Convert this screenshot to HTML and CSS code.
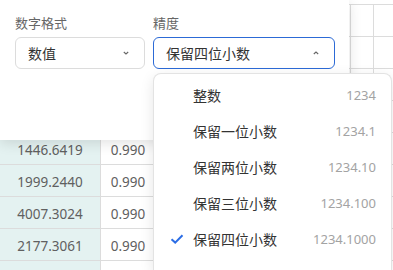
FILE: index.html
```html
<!DOCTYPE html>
<html lang="zh-CN">
<head>
  <meta charset="UTF-8" />
  <title>数字格式</title>
  <link rel="stylesheet" href="styles.css">
</head>
<body>
  <div class="sheet">
    <div class="row"><div class="c c1"></div><div class="c c2"></div><div class="c c3"></div><div class="c c4"></div><div class="c c5"></div></div>
    <div class="row"><div class="c c1"></div><div class="c c2"></div><div class="c c3"></div><div class="c c4"></div><div class="c c5"></div></div>
    <div class="row"><div class="c c1"></div><div class="c c2"></div><div class="c c3"></div><div class="c c4"></div><div class="c c5"></div></div>
    <div class="row"><div class="c c1"></div><div class="c c2"></div><div class="c c3"></div><div class="c c4"></div><div class="c c5"></div></div>
    <div class="row"><div class="c c1">1446.6419</div><div class="c c2">0.990</div><div class="c c3"></div><div class="c c4"></div><div class="c c5"></div></div>
    <div class="row"><div class="c c1">1999.2440</div><div class="c c2">0.990</div><div class="c c3"></div><div class="c c4"></div><div class="c c5"></div></div>
    <div class="row"><div class="c c1">4007.3024</div><div class="c c2">0.990</div><div class="c c3"></div><div class="c c4"></div><div class="c c5"></div></div>
    <div class="row"><div class="c c1">2177.3061</div><div class="c c2">0.990</div><div class="c c3"></div><div class="c c4"></div><div class="c c5"></div></div>
    <div class="row last"><div class="c c1"></div><div class="c c2"></div><div class="c c3"></div><div class="c c4"></div><div class="c c5"></div></div>
  </div>

  <div class="panel">
    <div class="field">
      <label>数字格式</label>
      <div class="select">
        <span>数值</span>
        <svg width="10" height="10" viewBox="0 0 10 10"><path d="M2.8 4 L5 6 L7.2 4" fill="none" stroke="#666" stroke-width="1.1"/></svg>
      </div>
    </div>
    <div class="field wide">
      <label>精度</label>
      <div class="select open">
        <span>保留四位小数</span>
        <svg width="10" height="10" viewBox="0 0 10 10"><path d="M2.8 6 L5 4 L7.2 6" fill="none" stroke="#666" stroke-width="1.1"/></svg>
      </div>
    </div>
  </div>

  <ul class="menu">
    <li><span class="tick"></span><span class="name">整数</span><span class="val">1234</span></li>
    <li><span class="tick"></span><span class="name">保留一位小数</span><span class="val">1234.1</span></li>
    <li><span class="tick"></span><span class="name">保留两位小数</span><span class="val">1234.10</span></li>
    <li><span class="tick"></span><span class="name">保留三位小数</span><span class="val">1234.100</span></li>
    <li class="active">
      <span class="tick"><svg width="14" height="12" viewBox="0 0 14 12"><path d="M1.5 6.2 L5.2 9.6 L12.5 2.2" fill="none" stroke="#2b6de5" stroke-width="2"/></svg></span>
      <span class="name">保留四位小数</span><span class="val">1234.1000</span>
    </li>
  </ul>
</body>
</html>
```

FILE: styles.css
```css
body {
  margin: 0;
  width: 393px;
  height: 270px;
  overflow: hidden;
  background: #fff;
  font-family: "Noto Sans", "Noto Sans CJK SC", sans-serif;
  color: #333;
  position: relative;
}

/* sheet behind the popup */
.sheet {
  padding-top: 4px;
  height: 270px;
  box-sizing: border-box;
  overflow: hidden;
}
.row {
  display: flex;
  height: 32px;
  border-top: 1px solid #dcdcdc;
  box-sizing: border-box;
}
.row.last {
  height: 10px;
}
.c {
  flex-shrink: 0;
  box-sizing: border-box;
  border-right: 1px solid #dcdcdc;
  font-size: 13.5px;
  color: #606060;
  text-align: center;
  line-height: 34px;
}
.c1 { width: 101px; background: #e4f2f1; }
.c2 { width: 53px; padding-left: 2px; }
.c3 { width: 197px; }
.c4 { width: 23px; }
.c5 { width: 40px; }

/* format popup */
.panel {
  position: absolute;
  top: 0;
  left: 0;
  width: 349px;
  height: 140px;
  background: #fff;
  border-bottom-right-radius: 8px;
  box-shadow: 0 3px 14px rgba(0, 0, 0, 0.12);
  display: flex;
  gap: 8px;
  padding: 14px 14px 0 15px;
  box-sizing: border-box;
}
.field label {
  display: block;
  font-size: 13px;
  color: #666;
  line-height: 18px;
  margin-bottom: 5px;
}
.select {
  width: 130px;
  height: 32px;
  box-sizing: border-box;
  border: 1px solid #dcdcdc;
  border-radius: 6px;
  display: flex;
  align-items: center;
  justify-content: space-between;
  padding: 0 13px 0 12px;
  font-size: 14px;
  color: #333;
}
.wide .select {
  width: 182px;
}
.select.open {
  border-color: #2c6ad6;
}

/* dropdown list */
.menu {
  position: absolute;
  top: 73px;
  left: 153px;
  width: 239px;
  height: 197px;
  margin: 0;
  padding: 3px 0 0;
  list-style: none;
  background: #fff;
  border: 1px solid #e3e3e3;
  border-bottom: 0;
  border-radius: 8px 8px 0 0;
  box-sizing: border-box;
  box-shadow: 0 4px 14px rgba(0, 0, 0, 0.1);
}
.menu li {
  display: flex;
  align-items: center;
  height: 36px;
  padding: 0 15px 0 16px;
  font-size: 14px;
}
.tick {
  width: 23px;
  display: flex;
  align-items: center;
}
.name {
  flex: 1;
  color: #333;
}
.val {
  color: #a3a3a3;
  font-size: 13px;
}
```
